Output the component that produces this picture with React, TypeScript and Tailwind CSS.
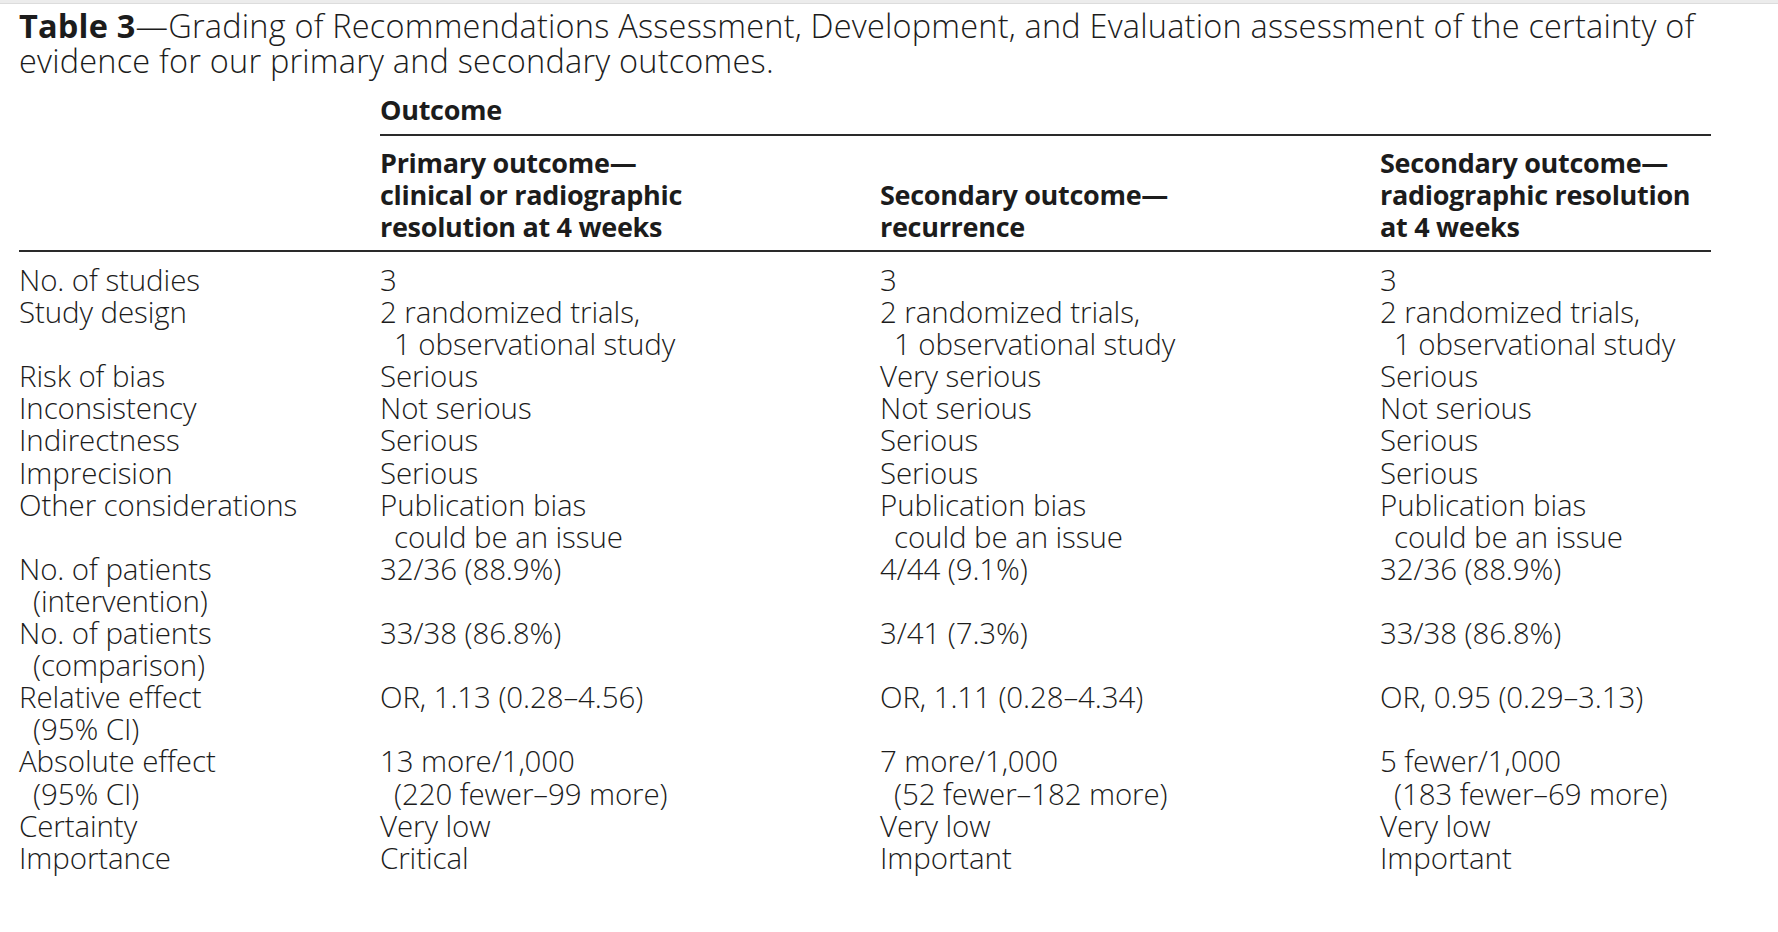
import React from "react";

type Row = { label: string[]; cells: string[][] };

const rows: Row[] = [
  { label: ["No. of studies"], cells: [["3"], ["3"], ["3"]] },
  {
    label: ["Study design"],
    cells: [
      ["2 randomized trials,", "1 observational study"],
      ["2 randomized trials,", "1 observational study"],
      ["2 randomized trials,", "1 observational study"],
    ],
  },
  { label: ["Risk of bias"], cells: [["Serious"], ["Very serious"], ["Serious"]] },
  { label: ["Inconsistency"], cells: [["Not serious"], ["Not serious"], ["Not serious"]] },
  { label: ["Indirectness"], cells: [["Serious"], ["Serious"], ["Serious"]] },
  { label: ["Imprecision"], cells: [["Serious"], ["Serious"], ["Serious"]] },
  {
    label: ["Other considerations"],
    cells: [
      ["Publication bias", "could be an issue"],
      ["Publication bias", "could be an issue"],
      ["Publication bias", "could be an issue"],
    ],
  },
  {
    label: ["No. of patients", "(intervention)"],
    cells: [["32/36 (88.9%)"], ["4/44 (9.1%)"], ["32/36 (88.9%)"]],
  },
  {
    label: ["No. of patients", "(comparison)"],
    cells: [["33/38 (86.8%)"], ["3/41 (7.3%)"], ["33/38 (86.8%)"]],
  },
  {
    label: ["Relative effect", "(95% CI)"],
    cells: [["OR, 1.13 (0.28–4.56)"], ["OR, 1.11 (0.28–4.34)"], ["OR, 0.95 (0.29–3.13)"]],
  },
  {
    label: ["Absolute effect", "(95% CI)"],
    cells: [
      ["13 more/1,000", "(220 fewer–99 more)"],
      ["7 more/1,000", "(52 fewer–182 more)"],
      ["5 fewer/1,000", "(183 fewer–69 more)"],
    ],
  },
  { label: ["Certainty"], cells: [["Very low"], ["Very low"], ["Very low"]] },
  { label: ["Importance"], cells: [["Critical"], ["Important"], ["Important"]] },
];

// continuation lines hang in a little, like the printed table
function Lines({ lines }: { lines: string[] }) {
  return (
    <div>
      {lines.map((l, i) => (
        <div key={i} className={i > 0 ? "pl-[14px]" : ""}>
          {l}
        </div>
      ))}
    </div>
  );
}

function Head({ lines }: { lines: string[] }) {
  return (
    <div>
      {lines.map((l, i) => (
        <div key={i}>{l}</div>
      ))}
    </div>
  );
}

export default function App() {
  return (
    <div className="min-h-screen bg-white text-[#1c1c1c] font-['Open_Sans','Noto_Sans',sans-serif]">
      <div className="h-[4px] bg-[#ececec] border-b border-[#dcdcdc]" />
      <div className="ml-[19px] w-[1692px]">
        <h1 className="mt-[4px] text-[32.5px] leading-[35px] font-light tracking-[0.2px]">
          <span className="font-bold">Table 3</span>—Grading of Recommendations Assessment, Development, and
          Evaluation assessment of the certainty of
          <br />
          evidence for our primary and secondary outcomes.
        </h1>

        <div className="mt-[16px] grid grid-cols-[361px_1fr]">
          <div />
          <div className="border-b-2 border-[#2a2a2a] pb-[8px] text-[27px] leading-[32px] font-bold tracking-[-0.3px]">
            Outcome
          </div>
        </div>

        <div className="grid grid-cols-[361px_500px_500px_1fr] items-end border-b-2 border-[#2a2a2a] pt-[11px] pb-[7px] text-[27px] leading-[32px] font-bold tracking-[-0.3px]">
          <div />
          <Head lines={["Primary outcome—", "clinical or radiographic", "resolution at 4 weeks"]} />
          <Head lines={["Secondary outcome—", "recurrence"]} />
          <Head lines={["Secondary outcome—", "radiographic resolution", "at 4 weeks"]} />
        </div>

        <div className="pt-[12px] grid grid-cols-[361px_500px_500px_1fr] text-[29.5px] leading-[32.1px] font-light tracking-[-0.1px]">
          {rows.map((r, i) => (
            <React.Fragment key={i}>
              <Lines lines={r.label} />
              {r.cells.map((c, j) => (
                <Lines key={j} lines={c} />
              ))}
            </React.Fragment>
          ))}
        </div>
      </div>
    </div>
  );
}
